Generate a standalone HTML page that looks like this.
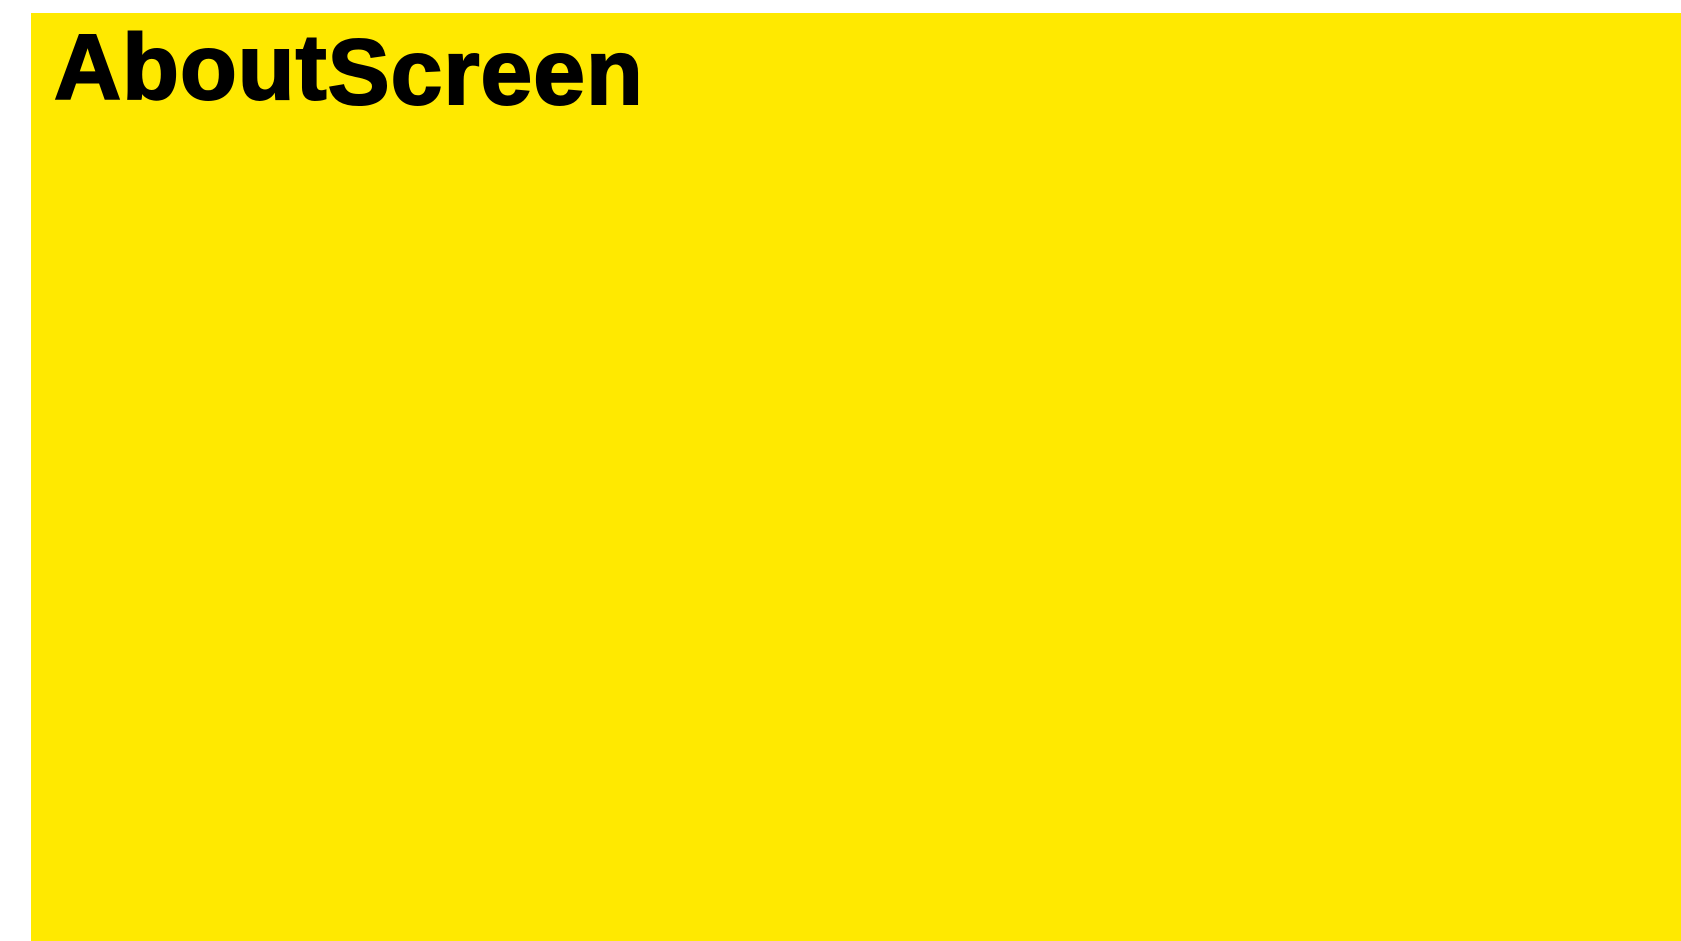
<!DOCTYPE html>
<html><head><meta charset="utf-8"><style>
html,body{margin:0;padding:0;background:#fff;width:1681px;height:941px;overflow:hidden}
.box{position:absolute;left:31px;top:13px;width:1650px;height:928px;background:#ffe900}
.t{position:absolute;left:54px;top:21px;font-family:"Liberation Sans",Arial,sans-serif;font-weight:bold;font-size:93px;line-height:1;color:#000;white-space:nowrap;-webkit-text-stroke:2px #000;letter-spacing:1px}
.t span{position:relative;top:5px}
</style></head><body>
<div class="box"></div>
<div class="t">About<span>Screen</span></div>
</body></html>
